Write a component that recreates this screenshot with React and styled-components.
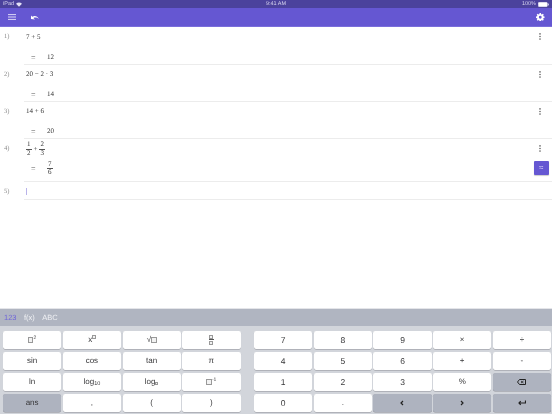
import React from "react";
import styled, { createGlobalStyle } from "styled-components";

const GlobalStyle = createGlobalStyle`
  html, body { margin: 0; padding: 0; background: #fff; }
  body { font-family: "Liberation Sans", Arial, sans-serif; text-rendering: geometricPrecision; }
`;

const Page = styled.div`
  width: 552px;
  height: 414px;
  display: flex;
  flex-direction: column;
  overflow: hidden;
  will-change: transform;
`;

const StatusBar = styled.div`
  height: 8px;
  background: #4b429c;
  color: #d6d3ee;
  font-size: 5.5px;
  display: grid;
  grid-template-columns: 1fr auto 1fr;
  align-items: center;
  padding: 0 3px;
`;

const StatusSide = styled.div`
  display: flex;
  align-items: center;
  gap: 2px;
  justify-content: ${(p) => (p.$right ? "flex-end" : "flex-start")};
`;

const Toolbar = styled.div`
  height: 19px;
  background: #6557d2;
  display: flex;
  align-items: center;
  padding: 0 7.5px 0 8px;
  gap: 14px;
  box-sizing: border-box;
  border-bottom: 1px solid #7a6edb;
`;

const Spacer = styled.div`
  flex: 1;
`;

const Sheet = styled.div`
  flex: 1;
`;

const Row = styled.div`
  height: ${(p) => p.$height}px;
  box-sizing: border-box;
  display: grid;
  grid-template-columns: 25px 1fr 24px;
  position: relative;
  &::after {
    content: "";
    position: absolute;
    left: 24px;
    right: 0;
    bottom: 0;
    height: 1px;
    background: #ececec;
  }
`;

const RowNumber = styled.div`
  font-family: "Liberation Serif", serif;
  font-size: 6.5px;
  color: #8b8b8b;
  padding: 5.5px 0 0 4px;
`;

const RowBody = styled.div`
  display: flex;
  flex-direction: column;
  font-family: "Liberation Serif", serif;
  font-size: 7px;
  color: #333;
  padding-left: 1px;
`;

const InputLine = styled.div`
  height: ${(p) => p.$height}px;
  flex: none;
  display: flex;
  align-items: center;
  gap: 2px;
`;

const OutputLine = styled.div`
  display: grid;
  flex: none;
  grid-template-columns: 21px auto;
  justify-content: start;
  align-items: center;
  height: ${(p) => p.$height}px;
`;

const EqualSign = styled.span`
  padding-left: 5px;
  font-size: 8px;
  color: #555;
`;

const Frac = styled.span`
  display: inline-flex;
  flex-direction: column;
  align-items: center;
  font-size: 7px;
  line-height: 7.5px;
`;

const FracTop = styled.span`
  border-bottom: 0.5px solid #555;
  padding: 0 1px;
`;

const RowActions = styled.div`
  display: flex;
  flex-direction: column;
  align-items: center;
  padding: 5.5px 1px 0 0;
  position: relative;
`;

const MoreDots = styled.svg`
  width: 4px;
  height: 7px;
  color: #666;
`;

const EqButton = styled.button`
  position: absolute;
  right: 3.5px;
  bottom: 7px;
  width: 14.5px;
  height: 14px;
  padding: 0;
  border: 0;
  border-radius: 1px;
  background: #6557d2;
  color: #d8d3f6;
  font-size: 8px;
  line-height: 14px;
  box-shadow: 0 1px 1px rgba(0, 0, 0, 0.2);
`;

const Caret = styled.span`
  width: 1px;
  height: 7px;
  background: #b9b3ea;
`;

const Keyboard = styled.div`
  background: #d2d5db;
  border-top: 1px solid #e4e5e9;
`;

const KeyboardTabs = styled.div`
  height: 17px;
  background: #b0b5c1;
  display: flex;
  align-items: center;
  gap: 7.5px;
  padding: 0 4px;
  font-size: 7.5px;
`;

const Tab = styled.span`
  color: ${(p) => (p.$active ? "#6f66d8" : "#f0f1f4")};
`;

const KeyArea = styled.div`
  display: grid;
  grid-template-columns: 237.5px 297px;
  justify-content: space-between;
  padding: 5px 1px 2.5px 3px;
`;

const KeyGrid = styled.div`
  display: grid;
  grid-template-columns: repeat(${(p) => p.$cols}, 1fr);
  grid-auto-rows: 17.5px;
  gap: 3.5px 1.5px;
`;

const Key = styled.div`
  display: flex;
  align-items: center;
  justify-content: center;
  border-radius: 2px;
  font-size: ${(p) => (p.$digit ? 8.5 : 8)}px;
  color: #38383a;
  background: ${(p) => (p.$dark ? "#aeb3bf" : "#fff")};
  box-shadow: 0 0.5px 0 #8e9098;
`;

const Sub = styled.span`
  font-size: 5.5px;
  align-self: flex-end;
  margin-bottom: 4px;
`;

const Sup = styled.span`
  font-size: 5px;
  align-self: flex-start;
  margin-top: 3.5px;
`;

const Box = styled.span`
  display: inline-block;
  width: ${(p) => p.$size || 5.5}px;
  height: ${(p) => p.$size || 5.5}px;
  box-sizing: border-box;
  border: 0.5px solid #999;
  background: #f2f2f2;
`;

const StackedFrac = styled.span`
  display: inline-flex;
  flex-direction: column;
  gap: 0.5px;
`;

const Bar = styled.span`
  height: 1px;
  background: #555;
  width: 5px;
  margin-left: -0.5px;
`;

const Glyph = styled.svg`
  display: block;
`;

const Dots = () => (
  <MoreDots viewBox="0 0 4 7">
    <circle cx="2" cy="0.9" r="0.8" fill="currentColor" />
    <circle cx="2" cy="3.5" r="0.8" fill="currentColor" />
    <circle cx="2" cy="6.1" r="0.8" fill="currentColor" />
  </MoreDots>
);

const MathRow = ({ n, height, topHeight, bottomHeight, input, output, active }) => (
  <Row $height={height}>
    <RowNumber>{n})</RowNumber>
    <RowBody>
      <InputLine $height={topHeight}>{input}</InputLine>
      {output && (
        <OutputLine $height={bottomHeight}>
          <EqualSign>=</EqualSign>
          {output}
        </OutputLine>
      )}
    </RowBody>
    <RowActions>
      {output && <Dots />}
      {active && <EqButton>≈</EqButton>}
    </RowActions>
  </Row>
);

const half = (
  <Frac>
    <FracTop>1</FracTop>
    <span>2</span>
  </Frac>
);

const twoThirds = (
  <Frac>
    <FracTop>2</FracTop>
    <span>3</span>
  </Frac>
);

export default function App() {
  return (
    <Page>
      <GlobalStyle />
      <StatusBar>
        <StatusSide>
          iPad
          <Glyph width="6" height="5" viewBox="0 0 7 5">
            <path d="M0 1.6C2 -.3 5 -.3 7 1.6L3.5 5z" fill="#e4e2f5" />
          </Glyph>
        </StatusSide>
        <span>9:41 AM</span>
        <StatusSide $right>
          100%
          <Glyph width="11" height="5" viewBox="0 0 11 5">
            <rect x=".3" y=".3" width="9" height="4.4" rx="1" fill="#fff" stroke="#e4e2f5" strokeWidth=".5" />
            <rect x="9.8" y="1.6" width="1" height="1.8" fill="#e4e2f5" />
          </Glyph>
        </StatusSide>
      </StatusBar>
      <Toolbar>
        <Glyph width="8" height="6" viewBox="0 0 8 6">
          <path d="M0 .6h8M0 3h8M0 5.4h8" stroke="#dcd8f6" strokeWidth="1" />
        </Glyph>
        <Glyph width="9" height="5" viewBox="0 0 9 5">
          <path d="M1 4V.6l1.3 1.2C4.6.2 7.4 1 9 4 7 2.4 5 2.2 3.4 2.9L5 4.5z" fill="#fff" />
        </Glyph>
        <Spacer />
        <Glyph width="8.5" height="8.5" viewBox="0 0 24 24">
          <path
            fill="#fff"
            fillRule="evenodd"
            d="M10 0h4l.6 3.2 1.9.8L19.2 2.1 22 4.9 20.1 7.6l.8 1.9L24 10v4l-3.1.6-.8 1.9 1.9 2.7-2.8 2.8-2.7-1.9-1.9.8L14 24h-4l-.6-3.1-1.9-.8-2.7 1.9L2 19.2l1.9-2.7-.8-1.9L0 14v-4l3.1-.5.8-1.9L2 4.9 4.8 2.1 7.5 4l1.9-.8zM12 8a4 4 0 1 0 0 8 4 4 0 0 0 0-8z"
          />
        </Glyph>
      </Toolbar>
      <Sheet>
        <MathRow n={1} height={38} topHeight={20} bottomHeight={20} input="7 + 5" output="12" />
        <MathRow n={2} height={37} topHeight={18} bottomHeight={22} input="20 − 2 · 3" output="14" />
        <MathRow n={3} height={37} topHeight={18} bottomHeight={22} input="14 + 6" output="20" />
        <MathRow
          n={4}
          height={43}
          topHeight={20}
          bottomHeight={19}
          input={<>{half}+{twoThirds}</>}
          output={
            <Frac>
              <FracTop>7</FracTop>
              <span>6</span>
            </Frac>
          }
          active
        />
        <MathRow n={5} height={18} topHeight={18} input={<Caret />} />
      </Sheet>
      <Keyboard>
        <KeyboardTabs>
          <Tab $active>123</Tab>
          <Tab>f(x)</Tab>
          <Tab>ABC</Tab>
        </KeyboardTabs>
        <KeyArea>
          <KeyGrid $cols={4}>
            <Key><Box /><Sup>2</Sup></Key>
            <Key>x<Sup><Box $size={3.5} /></Sup></Key>
            <Key>√<Box /></Key>
            <Key>
              <StackedFrac><Box $size={4} /><Bar /><Box $size={4} /></StackedFrac>
            </Key>
            <Key>sin</Key>
            <Key>cos</Key>
            <Key>tan</Key>
            <Key>π</Key>
            <Key>ln</Key>
            <Key>log<Sub>10</Sub></Key>
            <Key>log<Sub><Box $size={3} /></Sub></Key>
            <Key><Box /><Sup>-1</Sup></Key>
            <Key $dark>ans</Key>
            <Key>,</Key>
            <Key>(</Key>
            <Key>)</Key>
          </KeyGrid>
          <KeyGrid $cols={5}>
            <Key $digit>7</Key>
            <Key $digit>8</Key>
            <Key $digit>9</Key>
            <Key>×</Key>
            <Key>÷</Key>
            <Key $digit>4</Key>
            <Key $digit>5</Key>
            <Key $digit>6</Key>
            <Key>+</Key>
            <Key>-</Key>
            <Key $digit>1</Key>
            <Key $digit>2</Key>
            <Key $digit>3</Key>
            <Key>%</Key>
            <Key $dark>
              <Glyph width="9" height="6" viewBox="0 0 9 6">
                <path d="M2.5.5H8.5V5.5H2.5L.5 3z" fill="none" stroke="#222" />
                <path d="M4 2l2.5 2M6.5 2L4 4" stroke="#222" strokeWidth=".8" />
              </Glyph>
            </Key>
            <Key $digit>0</Key>
            <Key>.</Key>
            <Key $dark>
              <Glyph width="4" height="6" viewBox="0 0 4 6">
                <path d="M3 1L1 3l2 2" fill="none" stroke="#222" strokeWidth="1.2" />
              </Glyph>
            </Key>
            <Key $dark>
              <Glyph width="4" height="6" viewBox="0 0 4 6">
                <path d="M1 1l2 2-2 2" fill="none" stroke="#222" strokeWidth="1.2" />
              </Glyph>
            </Key>
            <Key $dark>
              <Glyph width="8" height="6" viewBox="0 0 8 6">
                <path d="M7.5 0.5V3H1M2.7 1.2L1 3l1.7 1.8" fill="none" stroke="#222" strokeWidth="1.2" />
              </Glyph>
            </Key>
          </KeyGrid>
        </KeyArea>
      </Keyboard>
    </Page>
  );
}
